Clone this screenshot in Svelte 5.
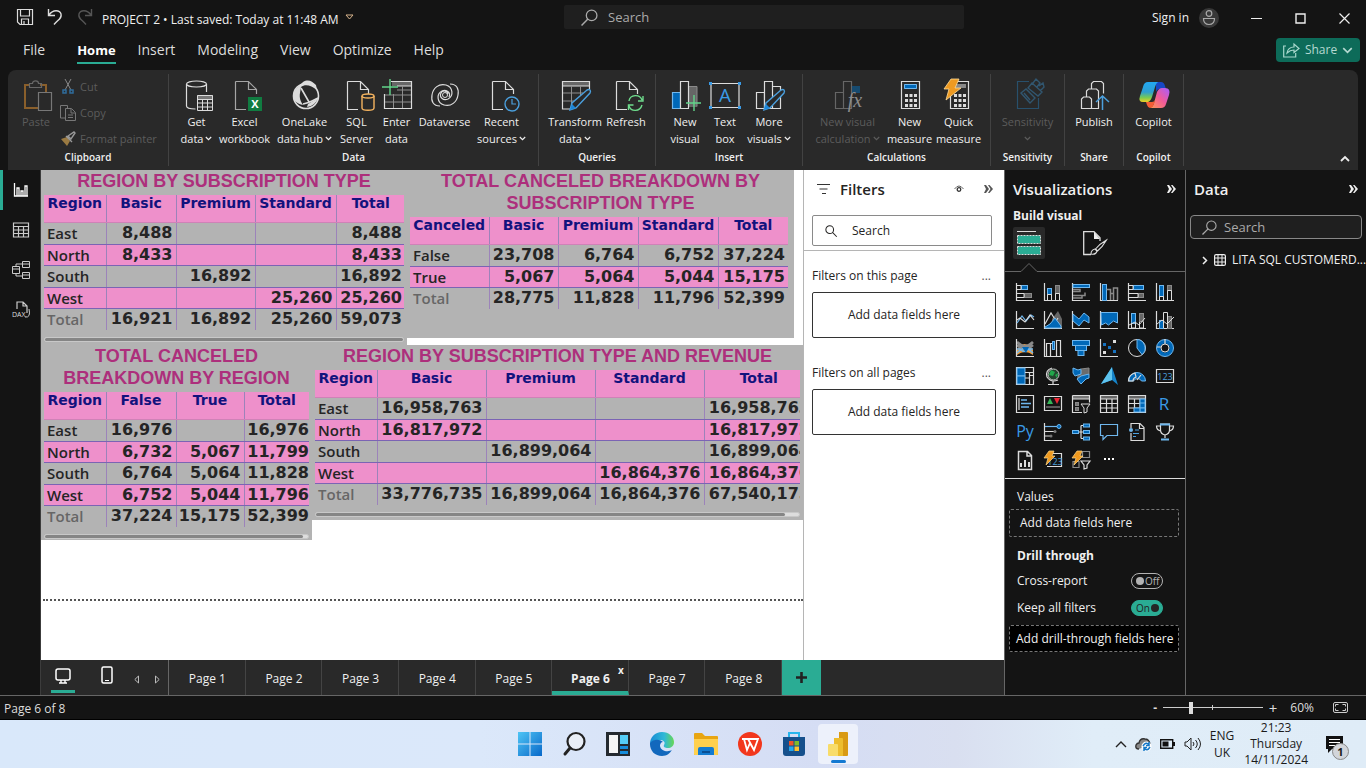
<script>
  const W = '#dcdcdc';
  const B = '#0068b8';
  const L = '#6fb7ee';
  const G = '#8a8a8a';
  const s = (d, c = W, w = 1.2, f = 'none') =>
    `<path d="${d}" fill="${f}" stroke="${c}" stroke-width="${w}"/>`;
  const f = (d, c) => `<path d="${d}" fill="${c}"/>`;
  const axes = s('M.5 0V17.5H18');
  const bolt = '<path d="M5 0h5L8 5h3L2 14l2-7H0z" fill="#f09a1f" stroke="#ffd98a" stroke-width=".7"/>';
  const page = s('M6.5 2.5H19.5L27.5 10.5V15M6.5 2.5V30.5H17M19.5 2.5V10.5H27.5');
  const calc = s('M7.5 2.5h18v27h-18z') +
    f('M11 15h3v3h-3zM15.500 15h3v3h-3zM20 15h3v3h-3zM11 20h3v3h-3zM15.500 20h3v3h-3zM20 20h3v3h-3zM11 25h3v3h-3zM15.500 25h3v3h-3zM20 25h3v3h-3z', W);
  const pencil = '<path d="M11 31l2-7L28 11q2-1 3 0t0 3L17 29z" fill="#292929" stroke="#4ba0de" stroke-width="1.400"/><path d="M11 31l2-6 4 4z" fill="#1c86d8"/>';

  const ribbonIcons = {
    paste: s('M18 29H5V6h5M20 6h6v7', '#8a5f2b', 2) + s('M9.500 8.500v-4h3c0-3.500 6-3.500 6 0h3v4z', '#686868') + s('M18.500 13.500h13v18h-13z', '#777'),
    getData: s('M5.500 5v22c0 2 4 3 9 3M25.500 5v8') + '<ellipse cx="15.500" cy="5" rx="10" ry="3" fill="none" stroke="#dcdcdc" stroke-width="1.200"/>' +
      f('M16 16h16v4H16z', '#777') + s('M16.500 16.500h15v15h-15zM16.500 20.500h15M16.500 24h15M16.500 28h15M21.500 20v12M26.500 20v12', W, 1),
    excel: s('M6.500 2.500H19.500L27.500 10.500V15M6.500 2.500V30.500H17M19.500 2.500V10.500H27.500', '#a5a5a5') + f('M19 18h14v14H19z', '#107c41') + '<text x="26" y="29" fill="#fff" font-size="11" font-weight="700" text-anchor="middle" font-family="Open Sans">X</text>',
    onelake: '<circle cx="17" cy="17" r="12.500" fill="none" stroke="#dcdcdc" stroke-width="1.600"/>' + f('M8 9L14 3c5-3 9-1 13 3l1 5C22 6 16 5 12 8l-1 6c-1 5 1 9 3 12-6-1-10-5-10-9 0-3 2-6 4-8z', W) + s('M12 9l8 14M14 25q5-1 9-3l6-3', W, 1.600) + f('M19 25l10-6c-2 5-5 8-11 9z', W),
    sql: page + '<path d="M21 17v12c0 3 12 3 12 0V17" fill="#292929" stroke="#f4b35f" stroke-width="1.400"/><ellipse cx="27" cy="17" rx="6" ry="2" fill="#292929" stroke="#f4b35f" stroke-width="1.400"/>',
    enter: f('M11 3h20v4H11z', '#666') + s('M10 2.500H30.500v27H3.500V15M16 7h15', W, 1.200) + s('M4 16h26M4 23h26M12.500 15v14M21.500 7v22M16 11h14', '#8e8e8e', 1) + s('M9 0v16M1 8h16', '#62d58a', 1.400),
    dataverse: s('M11 27C4 27 2 22 3 16 4 9 10 4 17 6c7 2 8 11 2 14-5 2-9-2-7-6 1-3 6-3 7 1') + s('M21 5c7 0 9 5 8 11-1 7-7 12-14 10-7-2-8-11-2-14 5-2 9 2 7 6') + '<circle cx="16" cy="16" r="2.500" fill="none" stroke="#dcdcdc"/>',
    recent: page + '<circle cx="26" cy="25" r="7" fill="#292929" stroke="#4ba0de" stroke-width="1.400"/>' + s('M26 20v5h4', '#4ba0de'),
    transform: f('M3 3h28v4H3z', '#666') + s('M11 30H3.500V2.500H30.500V10M3 7h27', W) + s('M4 14h20M4 22h13M12.500 7v22M21.500 7v9', '#8e8e8e', 1) + pencil,
    refresh: page + '<rect x="17" y="16" width="17" height="16" fill="#292929"/>' + s('M19 22c1-7 11-7 13-1M33 17v5h-5M32 26c-2 7-11 7-13 1M18.500 31v-5h5', '#6edb8c', 1.400),
    newVisual: f('M3 14h8v15H3z', '#0068b8') + s('M3.500 13.500h8v16h-8z', '#6fb7ee', 1.200) + f('M20 8h8v20h-8z', '#666') + s('M20 7.500h8v20', G, 1) + '<path d="M11.500 2.500h8v27h-8z" fill="#292929" stroke="#dcdcdc" stroke-width="1.200"/>' + s('M25 16v16M17 24h15', '#62d58a', 1.400),
    textBox: s('M2 4.500h28v24H2z', W, 1.200) + f('M0 3h3v3H0zM29 3h3v3h-3zM0 27h3v3H0zM29 27h3v3h-3z', '#3a9be6') + '<text x="16" y="23" fill="#3a9be6" font-size="19" text-anchor="middle" font-family="Open Sans">A</text>',
    moreVisuals: s('M3.500 13.500h8v16h-8zM19.500 7.500h8v22h-16') + '<path d="M11.500 2.500h8v27h-8z" fill="#292929" stroke="#dcdcdc" stroke-width="1.200"/>' + pencil,
    newCalc: s('M3.500 13.500h8v16h-8zM11.500 2.500h8v27h-8z', '#666') + f('M20 7h8v7h-8z', '#174b70') + '<text x="23" y="28" fill="#8b8b8b" font-size="20" font-style="italic" text-anchor="middle" font-family="Liberation Serif">fx</text>',
    measure: calc + f('M10 5h13v5H10z', '#0068b8') + s('M10.500 5.500h12v4h-12z', '#6fb7ee', 1),
    quick: calc + f('M11 5h12v4H11z', '#888') + '<path d="M8 0h8l-4 9h6L3 21l3-11H1z" fill="#ee9a21" stroke="#ffdc98" stroke-width=".8"/>',
    sensitivity: s('M17 2.500H5.500v27h21V19', '#28506c') + s('M9 14l5-4 9 9-5 5zM12 14l6 7', '#31566f', 1.400) + s('M16 9l4-5 10 9-4 4zM21 4l3-4 4 4-3 4M27 7l4-3 1 4-4 4', '#31566f', 1.400),
    publish: s('M13.500 10.500v-6l2-2h8l2 2v10M8.500 18v-6l2-2h8l2 2v17.500h-17V20l2-2h6l2 2v9.500') + s('M24.500 31V17M18 23l6.500-6 6.500 6', '#4ba0de', 1.500),
    copilot: '<defs><linearGradient id="cp1" x1="0" y1="0" x2="0" y2="1"><stop offset="0" stop-color="#22a8f2"/><stop offset=".5" stop-color="#2e9fd0"/><stop offset=".78" stop-color="#7acb50"/><stop offset="1" stop-color="#f3cf22"/></linearGradient><linearGradient id="cp2" x1="1" y1="0" x2="0" y2="1"><stop offset="0" stop-color="#a75dff"/><stop offset=".5" stop-color="#f15a98"/><stop offset="1" stop-color="#ff9952"/></linearGradient></defs>' +
      f('M18 3h5q3 0 4 4l1 3h-6q-3 0-4 3z', '#1747c4') + '<path d="M10 3h10q-2 1-3 5l-3 10q-2 6-6 5H5q-5 0-3-6L5 8q1-5 5-5z" fill="url(#cp1)"/><path d="M23 29H12q3-1 4-5l3-11q2-4 5-4h3q6 0 4 7l-3 9q-1 4-5 4z" fill="url(#cp2)"/>' + f('M8 23h6q2 0 3-2-1 7-5 8-2 0-3-3z', '#f35d36')
  };

  const groups = [
    { name: 'Data', items: [['getData', 'Get', 'data', 38, 1], ['excel', 'Excel', 'workbook', 58], ['onelake', 'OneLake', 'data hub', 62, 1], ['sql', 'SQL', 'Server', 42], ['enter', 'Enter', 'data', 38], ['dataverse', 'Dataverse', '', 58], ['recent', 'Recent', 'sources', 56, 1]] },
    { name: 'Queries', items: [['transform', 'Transform', 'data', 58, 1], ['refresh', 'Refresh', '', 44]] },
    { name: 'Insert', items: [['newVisual', 'New', 'visual', 38], ['textBox', 'Text', 'box', 42], ['moreVisuals', 'More', 'visuals', 46, 1]] },
    { name: 'Calculations', items: [['newCalc', 'New visual', 'calculation', 78, 1, 1], ['measure', 'New', 'measure', 46], ['quick', 'Quick', 'measure', 52]] },
    { name: 'Sensitivity', items: [['sensitivity', 'Sensitivity', '', 73, 1, 1]] },
    { name: 'Share', items: [['publish', 'Publish', '', 58]] },
    { name: 'Copilot', items: [['copilot', 'Copilot', '', 59]] }
  ];
  const groupWidths = [370, 117, 147, 188, 74, 59, 60];

  const t = (x, y, c, size, str) => `<text x="${x}" y="${y}" fill="${c}" font-size="${size}" text-anchor="middle" font-family="Open Sans">${str}</text>`;
  const r = (x, y, w, h, fill, stroke = 'none') => `<rect x="${x}" y="${y}" width="${w}" height="${h}" fill="${fill}" stroke="${stroke}"/>`;
  const visuals = [
    ['Stacked bar chart', axes + r(5.5, 2.5, 6, 4, B, L) + r(8.5, 10.5, 7, 4, '#666', G) + s('M1 2.500h4v4H1M1 10.500h7v4H1', W, 1)],
    ['Stacked column chart', axes + r(3.5, 5.5, 4, 6, B, L) + r(11.5, 2.5, 4, 8, '#666', G) + s('M3.500 17v-5.500h4V17M11.500 17v-6.500h4V17', W, 1)],
    ['Clustered bar chart', axes + r(1, 1.5, 16.500, 3, B, L) + s('M1 8.500h7v-2H1M1 12.500h12v-3M1 15h9v-2.500', G, 1.500)],
    ['Clustered column chart', axes + r(2.5, 1.5, 4, 16, B, L) + s('M6.500 6.500h4V17M10.500 10.500h3V17M13.500 17V5h4v12', G, 1.500)],
    ['100% stacked bar chart', axes + r(5.5, 2.5, 10, 4, B, L) + r(10.500, 10.5, 5, 4, '#666', G) + s('M1 2.500h4v4H1M1 10.500h9v4H1', W, 1)],
    ['100% stacked column chart', axes + r(3.5, 2.5, 4, 11, B, L) + r(11.500, 2.5, 4, 5, '#666', G) + s('M3.500 17v-3.500h4V17M11.500 17V7.500h4V17', W, 1)],
    ['Line chart', axes + s('M1 12l5-7 4 5 5-6 3 2', L) + s('M1 9l3-2 5 4 5-7 4 5')],
    ['Area chart', f('M8 8l6-8 4 8v9H8z', '#666') + axes + s('M1 13L7 2l5 8 2-3') + s('M1 16l5-3 5-6 6 8v2H1z', L, 1, B)],
    ['Stacked area chart', axes + s('M1 3l6 5 5-6 5 4v6l-5-3-5 6-6-5z', L, 1, B)],
    ['100% stacked area chart', axes + s('M1 1.500h16.500V12l-4-2-5 4-3-2-4 2z', L, 1, B)],
    ['Line and stacked column chart', axes + r(3.5, 2.5, 4, 10, B, L) + r(11.5, 2.5, 4, 8, '#666', G) + s('M3.500 12v5h4v-5M11.500 11v6h4v-6M1 14l6-3 4 3 6-7', W, 1)],
    ['Line and clustered column chart', axes + r(3.500, 9.500, 4, 8, B, L) + r(11.500, 5.500, 4, 12, '#666', G) + s('M7.500 17V1.500h4V17M1 13l5-4 5 4 7-7', W, 1)],
    ['Ribbon chart', f('M1 11q7-12 16 0v5q-8-6-16 0z', '#f19a37') + s('M1 3q8 8 16 0M1 6q8 7 16 0', G, 2.500) + s('M1 10h3q5 5 8 0h5M1 14q8-9 16 0', L, 1.500) + f('M6 8h7l-3 6z', B) + axes],
    ['Waterfall chart', axes + s('M2.500 17V4.500h4V17M6.500 4.500h3v5M12.500 17V1.500h4V17') + r(8.5, 2.5, 2, 8, B, L)],
    ['Funnel', r(.5, 1.500, 17, 5, B, L) + r(3.500, 6.500, 11, 5, B, L) + r(6, 11.500, 6, 5, B, L)],
    ['Scatter chart', axes + f('M3 4h3v3H3zM8 7h3v3H8zM13 11h3v3h-3z', '#1672c0') + f('M13 1h3v3h-3zM3 12h3v3H3z', W)],
    ['Pie chart', '<circle cx="9" cy="9" r="8.500" fill="none" stroke="#dcdcdc"/>' + s('M9 .5a8.500 8.500 0 0 1 5 15L9 9z', L, 1, B)],
    ['Donut chart', '<circle cx="9" cy="9" r="6.500" fill="none" stroke="#0068b8" stroke-width="4"/><circle cx="9" cy="9" r="8.500" fill="none" stroke="#6fb7ee"/><circle cx="9" cy="9" r="4" fill="#141414" stroke="#dcdcdc"/>' + s('M9 0v5M1 8h4', W)],
    ['Treemap', s('M.5.500h17v17H.5z') + r(1, 1, 8, 8, B, L) + r(1, 9, 8, 8, B, L) + s('M9 5.500h8M13.500 5v12M9 11h5M13 8.500h4')],
    ['Map', '<circle cx="9.500" cy="7.500" r="5.500" fill="#25452f" stroke="#ccc"/>' + f('M7 3l4 2-2 4-4-1zM11 8l3-2-1 5z', '#21a84b') + s('M8 1q-7 2-5 9 4 6 11 3M9 14v3M4 17.500h11')],
    ['Filled map', f('M6 3l5-1 6-1v9l-3 2-5 5-4-5z', '#6c6c6c') + s('M1 1l5 2 3-1v5l-6 2-2-3zM9 9l8-2v4l-3 1-5 5-4-5z', L, 1, B) + s('M9 2l8-1v6', G, 1)],
    ['Azure map', f('M12 0l6 18-6-5-11 4z', '#1684c9') + f('M12 0l0 13-11 4z', '#5fc4ee')],
    ['Gauge', s('M.5 14a8.500 8.500 0 0 1 17 0h-4a4.500 4.500 0 0 0-8 0z', L, 1, B) + s('M.5 14A8.500 8.500 0 0 1 7 6l1 4q-3 1-3 4zM9 13l4-5')],
    ['Card', s('M.5 2.500h17v13H.5z') + t(9, 13, '#4ba0de', 9, '123')],
    ['Multi-row card', s('M.5.500h17v17H.5zM3 3v12') + s('M5 5h6M5 8.500h10M5 12h8', L, 1.500)],
    ['KPI', s('M.5 1.500h17v14H.5z') + f('M3 9l3-6 3 6z', '#35b657') + f('M10 3h6l-3 6z', '#ed2734') + s('M2 12h14', G)],
    ['Slicer', f('M1 1h16v3H1z', '#777') + s('M.5.500h17v7M.5.500v17H10M1 4h16') + r(3.500, 7.500, 3, 3, '#777', G) + r(3.500, 12.500, 3, 3, '#777', G) + s('M9 9h9l-3 4v4l-3 1v-5z', W, 1, '#141414')],
    ['Table', f('M1 1h16v3H1z', '#666') + s('M.5.500h17v17H.5zM1 4h16M1 8.500h16M1 13h16M6.500 4v13M12 4v13')],
    ['Matrix', f('M1 1h16v3H1z', '#666') + s('M.5.500h17v17H.5zM1 4h16M1 8.500h11M1 13h11M6.500 4v13M12 4v9') + r(12, 4, 5, 9, B, L) + r(6, 13, 11, 4, B, L) + s('M12 8h5M12 13v4', L)],
    ['R script visual', t(8, 15, '#3a9be6', 17, 'R')],
    ['Python visual', t(9, 14, '#3a9be6', 16, 'Py')],
    ['Key influencers', s('M.5 0v17.500H18M1 8.500h9M1 13h5') + s('M1 3.500h12', L) + '<circle cx="15" cy="3.500" r="2" fill="#0068b8" stroke="#6fb7ee"/><circle cx="11" cy="8.500" r="1.500" fill="#777"/><circle cx="7" cy="13" r="1.500" fill="#777"/>'],
    ['Decomposition tree', s('M6 9h6M9 2.500v13M9 2.500h3M9 15.500h3') + r(.5, 7.500, 6, 3, B, L) + r(11.500, 1, 6, 3, B, L) + r(11.500, 7.500, 6, 3, B, L) + r(11.500, 14, 6, 3, B, L)],
    ['Q&amp;A', s('M.5 1.500h17v11H7l-4 4v-4H.5z', L)],
    ['Narrative', s('M3 5V.500h9l4 4v13H3V10M11.500.500v5H16') + '<circle cx="3" cy="7" r="2" fill="#6fb7ee"/>' + s('M7 7h4M5 10.500h6M5 13.500h3', '#4ba0de')],
    ['Metrics', s('M4.500 1h9v6q0 4-4.500 5-4.500-1-4.500-5zM4 3H.5q0 4 4 5M14 3h3.500q0 4-4 5M9 12v3') + s('M4 1.500h10M5 16.500h8', L, 1.800)],
    ['Paginated report', s('M2.500.500h9l4 4v14h-13zM11 1v4h4', W, 1.500) + f('M4 12h2v4H4zM8 9h2v7H8zM12 11h2v5h-2z', W)],
    ['New card', s('M8 2.500h9.500v13H3') + t(11, 14, '#4ba0de', 9, '123') + bolt],
    ['New slicer', s('M10.500.500h7v6h-7zM1 10.500h6v6H1z', G) + s('M9 10h9l-3 4v3l-3 1v-4z') + bolt],
    ['More visuals', '<path d="M4 7h2v2H4zM8 7h2v2H8zM12 7h2v2h-2z" fill="#fff"/>']
  ];

  const reports = [
    { cls: 'v1', title: 'REGION BY SUBSCRIPTION TYPE', cols: [62, 70, 79, 81, 69], thumb: 100,
      head: ['Region', 'Basic', 'Premium', 'Standard', 'Total'],
      rows: [['East', '8,488', '', '', '8,488'], ['North', '8,433', '', '', '8,433'], ['South', '', '16,892', '', '16,892'], ['West', '', '', '25,260', '25,260'], ['Total', '16,921', '16,892', '25,260', '59,073']] },
    { cls: 'v2', title: 'TOTAL CANCELED BREAKDOWN BY SUBSCRIPTION TYPE', cols: [79, 69, 80, 80, 70], thumb: 0,
      head: ['Canceled', 'Basic', 'Premium', 'Standard', 'Total'],
      rows: [['False', '23,708', '6,764', '6,752', '37,224'], ['True', '5,067', '5,064', '5,044', '15,175'], ['Total', '28,775', '11,828', '11,796', '52,399']] },
    { cls: 'v3', title: 'TOTAL CANCELED BREAKDOWN BY REGION', cols: [62, 70, 68, 65], thumb: 98,
      head: ['Region', 'False', 'True', 'Total'],
      rows: [['East', '16,976', '', '16,976'], ['North', '6,732', '5,067', '11,799'], ['South', '6,764', '5,064', '11,828'], ['West', '6,752', '5,044', '11,796'], ['Total', '37,224', '15,175', '52,399']] },
    { cls: 'v4', title: 'REGION BY SUBSCRIPTION TYPE AND REVENUE', cols: [62, 109, 109, 109, 109], thumb: 97,
      head: ['Region', 'Basic', 'Premium', 'Standard', 'Total'],
      rows: [['East', '16,958,763', '', '', '16,958,763'], ['North', '16,817,972', '', '', '16,817,972'], ['South', '', '16,899,064', '', '16,899,064'], ['West', '', '', '16,864,376', '16,864,376'], ['Total', '33,776,735', '16,899,064', '16,864,376', '67,540,175']] }
  ];
  const total = (cols) => cols.reduce((a, b) => a + b, 0);

  const pages = [1, 2, 3, 4, 5, 6, 7, 8];
  let current = $state(6);
  let menu = $state('Home');
  let crossReport = $state(false);
  let keepFilters = $state(true);
  let zoom = $state(27);
</script>

{#snippet icon(body, size = 18)}
  <svg width={size} height={size} viewBox="0 0 {size} {size}" aria-hidden="true">{@html body}</svg>
{/snippet}

{#snippet caret(size = 7, weight = 1)}
  <svg class="caret" width={size} height={size} viewBox="0 0 7 7" aria-hidden="true"><path d="M.8 2l2.700 2.700L6.200 2" fill="none" stroke="currentColor" stroke-width={weight} /></svg>
{/snippet}

{#snippet collapse()}
  <svg width="10" height="10" viewBox="0 0 10 10" aria-hidden="true"><path d="M1 1h2l3 4-3 4H1l2-4zM5 1h1.500L10 5 6.500 9H5l2.500-4z" fill="currentColor" /></svg>
{/snippet}

{#snippet lens(size = 16)}
  <svg width={size} height={size} viewBox="0 0 16 16" aria-hidden="true"><circle cx="10" cy="6" r="5" fill="none" stroke="currentColor" stroke-width="1.200" /><path d="M6.500 9.500L.5 15.500" stroke="currentColor" stroke-width="1.400" /></svg>
{/snippet}

{#snippet lensRight(size = 14)}
  <svg width={size} height={size} viewBox="0 0 14 14" aria-hidden="true"><circle cx="5.500" cy="5.500" r="4.500" fill="none" stroke="currentColor" stroke-width="1.200" /><path d="M8.700 8.700l5 5" stroke="currentColor" stroke-width="1.200" /></svg>
{/snippet}

<div class="app">
  <header class="titlebar">
    <div class="file-info">
      <button aria-label="Save">
        <svg width="16" height="16" viewBox="0 0 16 16"><path d="M.5.500h15v15H3l-2.500-2.500zM3.500 1v6h9V1M4.500 15v-5h7v5M7 12v3" fill="none" stroke="#ddd" stroke-width="1.200" /></svg>
      </button>
      <button aria-label="Undo">
        <svg width="16" height="16" viewBox="0 0 16 16"><path d="M1.500 0v6.500H8M2 6C6 0 13 1 14 5c1 4-2 5-7 10.500" fill="none" stroke="#ddd" stroke-width="1.400" /></svg>
      </button>
      <button aria-label="Redo">
        <svg width="16" height="16" viewBox="0 0 16 16"><path d="M14.500 0v6.500H8M14 6C10 0 3 1 2 5c-1 4 2 5 7 10.500" fill="none" stroke="#555" stroke-width="1.400" /></svg>
      </button>
      <span class="doc">PROJECT 2 • Last saved: Today at 11:48 AM</span>
      <svg width="9" height="6" viewBox="0 0 9 6" aria-hidden="true"><path d="M1 1h7L4.500 5z" fill="none" stroke="#d8b48c" /></svg>
    </div>
    <label class="top-search">{@render lens(17)}<input aria-label="Search" placeholder="Search" /></label>
    <div class="window">
      <span>Sign in</span>
      <svg class="avatar" width="20" height="20" viewBox="0 0 20 20" aria-hidden="true"><circle cx="10" cy="10" r="10" fill="#383838" /><circle cx="10" cy="5.500" r="2.800" fill="none" stroke="#aaa" stroke-width="1.200" /><path d="M4.500 10.500h11q0 6-5.500 6t-5.500-6z" fill="none" stroke="#aaa" stroke-width="1.200" /></svg>
      <button aria-label="Minimize"><svg width="11" height="11" viewBox="0 0 11 11"><path d="M0 5.500h11" stroke="#eee" /></svg></button>
      <button aria-label="Maximize"><svg width="11" height="11" viewBox="0 0 11 11"><path d="M1 1h9v9H1z" fill="none" stroke="#eee" stroke-width="1.400" /></svg></button>
      <button aria-label="Close"><svg width="11" height="11" viewBox="0 0 11 11"><path d="M.5.500l10 10M10.500.500l-10 10" stroke="#eee" stroke-width="1.200" /></svg></button>
    </div>
  </header>

  <nav class="menubar" aria-label="Ribbon tabs">
    {#each ['File', 'Home', 'Insert', 'Modeling', 'View', 'Optimize', 'Help'] as item}
      <button class:active={menu === item} onclick={() => (menu = item)}>{item}</button>
    {/each}
    <button class="share">
      <svg width="17" height="15" viewBox="0 0 17 15" aria-hidden="true"><path d="M3 3H.7v11h12v-4M4 10q1-6 7-6V1l5 4.500-5 4V7Q7 7 4 10z" fill="none" stroke="#a9d8cd" stroke-width="1.200" /></svg>
      Share {@render caret(11)}
    </button>
  </nav>

  <section class="ribbon" aria-label="Home ribbon">
    <div class="group clipboard">
      <div class="items">
        <button class="tool off">{@render icon(ribbonIcons.paste, 32)}<span>Paste</span></button>
        <div class="small-tools">
          <button><svg width="16" height="16" viewBox="0 0 16 16"><path d="M5 0l6 11M11 0L5 11" stroke="#888" fill="none" /><path d="M3 11h3v3H3zM10 11h3v3h-3z" fill="none" stroke="#2f6c9c" stroke-width="1.500" /></svg>Cut</button>
          <button><svg width="16" height="16" viewBox="0 0 16 16"><path d="M5 13H.5V.500h7V3M5.500 3.500h6l4 4v8h-10zM11 4v4h4M8 10h5M8 12.500h5" stroke="#777" fill="none" /></svg>Copy</button>
          <button><svg width="16" height="16" viewBox="0 0 16 16"><path d="M1 8l6 7 3-5-3-4z" fill="#9a7a42" /><path d="M6 5l6 6M8 5l6-4 1 1-4 6z" stroke="#999" fill="none" stroke-width="1.400" /></svg>Format painter</button>
        </div>
      </div>
      <h2>Clipboard</h2>
    </div>
    {#each groups as g, i}
      <div class="group" style="width: {groupWidths[i]}px">
        <div class="items">
          {#each g.items as [name, a, b, width, drop, off]}
            <button class="tool" class:off style="width: {width}px">
              {@render icon(ribbonIcons[name], 32)}
              <span>{a}</span>
              <span>{b}{#if drop}{@render caret(7, 1.2)}{/if}</span>
            </button>
          {/each}
        </div>
        <h2>{g.name}</h2>
      </div>
    {/each}
    <button class="fold" aria-label="Collapse ribbon"><svg width="10" height="7" viewBox="0 0 10 7"><path d="M1 6l4-4 4 4" fill="none" stroke="#eee" stroke-width="1.800" /></svg></button>
  </section>

  <main>
    <nav class="views" aria-label="Views">
      <button class="active" aria-label="Report view"><svg width="16" height="16" viewBox="0 0 16 16"><path d="M1.500 1v13H15M4 14V6h2v8M8 14V9h2v5M12 14V4h2v10" fill="none" stroke="#fff" stroke-width="1.300" /></svg></button>
      <button aria-label="Table view"><svg width="16" height="16" viewBox="0 0 16 16"><path d="M.5 1h15v14H.5zM1 4.500h14M1 8h14M1 11.500h14M5.500 4v11M10.500 4v11" fill="none" stroke="#ccc" stroke-width="1.200" /></svg></button>
      <button aria-label="Model view"><svg width="18" height="18" viewBox="0 0 18 18"><path d="M.5 5.500h7v7h-7zM1 8h6M10.500.500h7v6h-7zM11 3h6M10.500 11.500h7v6h-7zM11 14h6M4 5V3h6M4 13v2h6" fill="none" stroke="#ccc" /></svg></button>
      <button aria-label="DAX query view"><svg width="18" height="18" viewBox="0 0 18 18"><path d="M5 8V1h6l4 4v7M11 1v4h4" fill="none" stroke="#ccc" stroke-width="1.200" /><text x="0" y="16" fill="#ddd" font-size="7" font-family="Open Sans">DAX</text><path d="M13 16q6 1 4-8" stroke="#ccc" fill="none" /></svg></button>
    </nav>

    <div class="center">
      <div class="work">
        <div class="canvas">
          {#each reports as rep}
            <section class="visual {rep.cls}">
              <h3>{rep.title}</h3>
              <div class="clip">
                <table style="width: {total(rep.cols)}px">
                  <colgroup>{#each rep.cols as w}<col style="width: {w}px" />{/each}</colgroup>
                  <thead><tr>{#each rep.head as h}<th scope="col">{h}</th>{/each}</tr></thead>
                  <tbody>
                    {#each rep.rows as row}
                      <tr class:sum={row[0] === 'Total'}>
                        <th scope="row">{row[0]}</th>
                        {#each row.slice(1) as v}<td>{v}</td>{/each}
                      </tr>
                    {/each}
                  </tbody>
                </table>
              </div>
              {#if rep.thumb}<div class="scroll"><div style="width: {rep.thumb}%"></div></div>{/if}
            </section>
          {/each}
          <div class="page-end"></div>
        </div>

        <aside class="filters">
          <div class="filter-head">
            <div class="heading">
              <svg width="14" height="12" viewBox="0 0 14 12" aria-hidden="true"><path d="M0 1.500h13M2.500 6h8M5 10.500h4" stroke="#333" stroke-width="1.200" /></svg>
              <h2>Filters</h2>
              <svg class="eye" width="10" height="8" viewBox="0 0 10 8" aria-hidden="true"><path d="M.5 4Q5-2 9.500 4" fill="none" stroke="#666" /><circle cx="5" cy="4.500" r="1.800" fill="none" stroke="#333" stroke-width="1.300" /></svg>
              <button aria-label="Collapse filters">{@render collapse()}</button>
            </div>
            <label class="filter-search">{@render lensRight(12)}<input aria-label="Search filters" placeholder="Search" /></label>
          </div>
          <div class="filter-block">
            <div class="row"><span>Filters on this page</span><button aria-label="More options for this page">...</button></div>
            <div class="drop">Add data fields here</div>
          </div>
          <div class="filter-block">
            <div class="row"><span>Filters on all pages</span><button aria-label="More options for all pages">...</button></div>
            <div class="drop">Add data fields here</div>
          </div>
        </aside>
      </div>

      <div class="pagebar">
        <div class="layouts">
          <button class="active" aria-label="Desktop layout"><svg width="16" height="17" viewBox="0 0 16 17"><rect x="1" y="1" width="14" height="11" rx="2" fill="none" stroke="#fff" stroke-width="1.500" /><path d="M4 15h8M6 12v3M10 12v3" stroke="#fff" stroke-width="1.400" /></svg></button>
          <button aria-label="Mobile layout"><svg width="12" height="18" viewBox="0 0 12 18"><rect x="1" y="1" width="10" height="16" rx="1.500" fill="none" stroke="#fff" stroke-width="1.500" /><path d="M4 14.500h4" stroke="#fff" /></svg></button>
          <button class="step" aria-label="Previous page"><svg width="5" height="9" viewBox="0 0 5 9"><path d="M4.500 1v7L.8 4.500z" fill="none" stroke="#bbb" /></svg></button>
          <button class="step" aria-label="Next page"><svg width="5" height="9" viewBox="0 0 5 9"><path d="M.5 1v7l3.700-3.500z" fill="none" stroke="#bbb" /></svg></button>
        </div>
        <div class="tabs">
          {#each pages as p}
            <div class="tab" class:active={current === p}>
              <button onclick={() => (current = p)}>Page {p}</button>
              {#if current === p}<button class="close" aria-label="Delete page">x</button>{/if}
            </div>
          {/each}
        </div>
        <button class="add" aria-label="New page"><svg width="11" height="11" viewBox="0 0 11 11"><path d="M5.500 0v11M0 5.500h11" stroke="#222" stroke-width="2.600" /></svg></button>
      </div>
    </div>

    <aside class="viz">
      <div class="heading"><h2>Visualizations</h2><button aria-label="Collapse visualizations">{@render collapse()}</button></div>
      <h3>Build visual</h3>
      <div class="modes">
        <button class="active" aria-label="Build visual"><svg width="24" height="24" viewBox="0 0 24 24"><path d="M0 .5h19" stroke="#ddd" /><rect x=".5" y="4.500" width="23" height="8" fill="#2aac94" stroke="#ddd" stroke-dasharray="2 1" /><rect x=".5" y="15.500" width="23" height="8" fill="#2aac94" stroke="#ddd" stroke-dasharray="2 1" /></svg></button>
        <button aria-label="Format visual"><svg width="24" height="25" viewBox="0 0 24 25"><path d="M8 23.500H.7V.700H11l6 6V10" fill="none" stroke="#ddd" stroke-width="1.300" /><path d="M11 1v7h6z" fill="#eee" /><path d="M23.500 9q-7 4-11 9l2 2q5-4 9-11zM12 18q-4 1-4 5 5 1 6-3z" fill="#141414" stroke="#ddd" stroke-width="1.100" /></svg></button>
      </div>
      <svg class="notch" width="180" height="10" viewBox="0 0 180 10" aria-hidden="true"><path d="M0 9.500h16l8-8 8 8h148" fill="none" stroke="#666" /></svg>
      <div class="gallery">
        {#each visuals as [name, body]}<button aria-label={name}>{@render icon(body)}</button>{/each}
      </div>
      <div class="wells">
        <p>Values</p>
        <div class="well">Add data fields here</div>
        <h3>Drill through</h3>
        <label class="switch"><span>Cross-report</span><input type="checkbox" role="switch" bind:checked={crossReport} /><span class="track" class:on={crossReport}>{crossReport ? 'On' : 'Off'}</span></label>
        <label class="switch"><span>Keep all filters</span><input type="checkbox" role="switch" bind:checked={keepFilters} /><span class="track" class:on={keepFilters}>{keepFilters ? 'On' : 'Off'}</span></label>
        <div class="well dark">Add drill-through fields here</div>
      </div>
    </aside>

    <aside class="data">
      <div class="heading"><h2>Data</h2><button aria-label="Collapse data">{@render collapse()}</button></div>
      <label class="data-search">{@render lens(15)}<input aria-label="Search data" placeholder="Search" /></label>
      <button class="dataset">
        <svg width="6" height="9" viewBox="0 0 6 9" aria-hidden="true"><path d="M1 1l3.500 3.500L1 8" fill="none" stroke="#eee" stroke-width="1.500" /></svg>
        <svg width="12" height="12" viewBox="0 0 12 12" aria-hidden="true"><rect x=".6" y=".6" width="10.800" height="10.800" rx="1.500" fill="none" stroke="#eee" stroke-width="1.200" /><path d="M1 4h10M1 8h10M4 1v10M8 1v10" stroke="#eee" /></svg>
        <span>LITA SQL CUSTOMERD...</span>
      </button>
    </aside>
  </main>

  <footer class="status">
    <span>Page 6 of 8</span>
    <div class="zoom">
      <button aria-label="Zoom out">-</button>
      <input type="range" aria-label="Zoom" min="0" max="100" bind:value={zoom} />
      <button aria-label="Zoom in">+</button>
      <span>60%</span>
      <button class="fit" aria-label="Fit to page"><svg width="15" height="11" viewBox="0 0 15 11"><rect x=".5" y=".5" width="14" height="10" rx="1.500" fill="none" stroke="#ccc" /><path d="M5.500 2.500h-3v2M2.500 6.500v2h3M9.500 2.500h3v2M12.500 6.500v2h-3" fill="none" stroke="#ccc" /></svg></button>
    </div>
  </footer>

  <div class="taskbar">
    <div class="apps">
      <button aria-label="Start"><svg width="26" height="26" viewBox="0 0 26 26"><defs><linearGradient id="win" x1="0" y1="0" x2="1" y2="1"><stop offset="0" stop-color="#4fc5f5" /><stop offset="1" stop-color="#0868c9" /></linearGradient></defs><path d="M1 1h11.500v11.500H1zM13.500 1H25v11.500H13.500zM1 13.500h11.500V25H1zM13.500 13.500H25V25H13.500z" fill="url(#win)" /></svg></button>
      <button aria-label="Search"><svg width="26" height="26" viewBox="0 0 26 26"><circle cx="15" cy="10.500" r="8.500" fill="#e9eef7" stroke="#222" stroke-width="2.200" /><path d="M9 17l-5 6" stroke="#222" stroke-width="3" stroke-linecap="round" /></svg></button>
      <button aria-label="Widgets"><svg width="26" height="26" viewBox="0 0 26 26"><path d="M1 1h24v24H1z" fill="#242a30" /><path d="M4 4h9v18H4z" fill="#f5f5f5" /><path d="M15 4h8v9h-8z" fill="#54cdf7" /><path d="M15 15h8v3h-8zM15 20h8v3h-8z" fill="#168ddb" /></svg></button>
      <button aria-label="Edge"><svg width="26" height="26" viewBox="0 0 26 26"><defs><linearGradient id="eg" x1="0" y1="0" x2="1" y2="0"><stop offset="0" stop-color="#188bd5" /><stop offset=".6" stop-color="#2fb9d6" /><stop offset="1" stop-color="#68d754" /></linearGradient></defs><path d="M1 13C1 6 6 1 13 1s12 5 12 10c0 4-3 6-6 6-3 0-5-1-4-3 2-3-1-5-4-5C6 9 1 12 1 16z" fill="url(#eg)" /><path d="M1 13c0 7 5 12 12 12 5 0 8-3 10-6-3 2-11 2-12-4 0-2 1-4 3-4-5-5-13-1-13 2z" fill="#1268bd" /></svg></button>
      <button aria-label="File Explorer"><svg width="26" height="26" viewBox="0 0 26 26"><path d="M1 3q0-1 1-1h7l3 3h12q1 0 1 1v17q0 1-1 1H2q-1 0-1-1z" fill="#e8a512" /><path d="M1 8h24v15q0 1-1 1H2q-1 0-1-1z" fill="#ffd04e" /><path d="M5 24v-6q0-2 2-2h12q2 0 2 2v6z" fill="#137bd0" /><path d="M9 20h8v2H9z" fill="#0a4f93" /></svg></button>
      <button aria-label="WPS Office"><svg width="26" height="26" viewBox="0 0 26 26"><circle cx="13" cy="13" r="12" fill="#f2371d" /><path d="M5 8h16l-4 11-4-7-3 7L7 8M11 8l6 11" fill="none" stroke="#fff" stroke-width="1.800" /></svg></button>
      <button aria-label="Microsoft Store"><svg width="26" height="26" viewBox="0 0 26 26"><path d="M8 7V2h10v5" fill="none" stroke="#27b5ed" stroke-width="2" /><path d="M2 6h22v16q0 3-3 3H5q-3 0-3-3z" fill="#16508c" /><path d="M8 10h4.500v4.500H8z" fill="#f05325" /><path d="M13.500 10H18v4.500h-4.500z" fill="#80bb27" /><path d="M8 15.500h4.500V20H8z" fill="#24a8ec" /><path d="M13.500 15.500H18V20h-4.500z" fill="#ffc22d" /></svg></button>
      <button class="running" aria-label="Power BI"><svg width="26" height="26" viewBox="0 0 26 26"><path d="M14 1h8q1 0 1 1v22q0 1-1 1h-8z" fill="#d99a13" /><path d="M9 7h8q1 0 1 1v17H9z" fill="#edbd2d" /><path d="M4 13h8q1 0 1 1v11H4q-1 0-1-1V14q0-1 1-1z" fill="#f8dc6a" /></svg></button>
    </div>
    <div class="tray">
      <svg width="12" height="8" viewBox="0 0 12 8" aria-hidden="true"><path d="M1 7l5-5 5 5" fill="none" stroke="#222" stroke-width="1.400" /></svg>
      <svg width="17" height="15" viewBox="0 0 17 15" aria-hidden="true"><path d="M4 12Q0 12 1 8q1-2 3-2 1-5 6-4 4 0 5 5" fill="#888" stroke="#333" stroke-width="1.400" /><circle cx="11.500" cy="9.500" r="5" fill="#fff" /><path d="M8 9q3-5 6-1M15 10q-3 5-6 1M14 5v3.500h-3M9 14v-3.500h3" fill="none" stroke="#1478c8" stroke-width="1.500" /></svg>
      <svg width="16" height="10" viewBox="0 0 16 10" aria-hidden="true"><path d="M.7.700h12v8.600H.7z" fill="none" stroke="#111" stroke-width="1.400" /><path d="M2.500 2.500h6v5h-6zM13 3h2v4h-2z" fill="#111" /></svg>
      <svg width="18" height="14" viewBox="0 0 18 14" aria-hidden="true"><path d="M1 5h2l4-4v12L3 9H1zM9 5q2 2 0 4M11.500 3q3.500 4 0 8M14 1q5 6 0 12" fill="none" stroke="#222" /></svg>
      <span class="lang">ENG<br />UK</span>
      <time>21:23<br />Thursday<br />14/11/2024</time>
      <div class="notice">
        <svg width="20" height="19" viewBox="0 0 20 19" aria-hidden="true"><path d="M1 1h17v13H7l-4 4v-4H1z" fill="#111" /><path d="M4 4.500h11M4 7.500h11M4 10.500h8" stroke="#fff" /></svg>
        <b>1</b>
      </div>
    </div>
  </div>
</div>

<style>
  :global(body) { margin: 0; background: #141414; }
  .app, .app :global(*) { box-sizing: border-box; }
  .app { height: 100vh; min-height: 720px; display: flex; flex-direction: column; overflow: hidden; background: #141414; color: #f0f0f0; font: 12px/16px "Open Sans", sans-serif; }
  button, input { font: inherit; color: inherit; background: none; border: 0; padding: 0; margin: 0; outline: 0; }
  h2, h3, p { margin: 0; }
  svg { display: block; flex: none; overflow: visible; }
  input::placeholder { color: inherit; opacity: 1; }

  .titlebar { flex: none; height: 34px; display: flex; }
  .file-info { flex: 1; display: flex; align-items: center; gap: 14px; padding-left: 17px; white-space: nowrap; }
  .file-info .doc { margin: 6px -8px 0 -5px; }
  .top-search { width: 400px; height: 24px; margin-top: 5px; padding-left: 17px; display: flex; align-items: center; gap: 10px; background: #1f1f1f; border-radius: 2px; color: #aaa; font-size: 13px; }
  .top-search input { flex: 1; min-width: 0; }
  .window { width: 402px; display: flex; align-items: center; justify-content: flex-end; padding: 2px 16px 0 0; gap: 33px; }
  .window .avatar { margin: 0 -1px 0 -23px; }

  .menubar { flex: none; height: 36px; display: flex; align-items: center; padding: 0 6px 4px 23px; font-size: 14px; gap: 22px; color: #ddd; }
  .menubar button { height: 28px; padding: 0; }
  .menubar button:first-child { margin-right: 10px; }
  .menubar .active { font-weight: 700; color: #fff; font-size: 13px; border-bottom: 2px solid #2aac94; padding-top: 2px; }
  .menubar .share { margin-left: auto; width: 84px; height: 24px; display: flex; align-items: center; justify-content: center; gap: 5px; background: #0d6b59; border-radius: 4px; color: #b5d9d1; font-size: 12px; }

  .ribbon { flex: none; height: 100px; margin: 0 8px; display: flex; background: #292929; border-radius: 8px 8px 0 0; position: relative; }
  .group { height: 92px; margin-top: 4px; padding-top: 5px; border-right: 1px solid #424242; display: flex; flex-direction: column; }
  .items { flex: 1; display: flex; justify-content: center; }
  .clipboard { width: 161px; }
  .clipboard .items { justify-content: flex-start; padding-left: 8px; }
  .group h2 { font-size: 10px; line-height: 14px; font-weight: 600; text-align: center; padding-bottom: 2px; }
  .tool { display: flex; flex-direction: column; align-items: center; font-size: 11px; line-height: 17px; white-space: nowrap; }
  .tool span { display: flex; align-items: center; gap: 2px; min-height: 17px; }
  .tool :global(svg + span) { margin-top: 2px; }
  .clipboard .tool { width: 40px; }
  .group .off { color: #5c5c5c; }
  .small-tools { display: flex; flex-direction: column; gap: 10px; padding-left: 4px; color: #5c5c5c; font-size: 11px; }
  .small-tools button { display: flex; align-items: center; gap: 4px; white-space: nowrap; }
  .fold { position: absolute; right: 8px; bottom: 8px; }

  main { flex: 1; min-height: 0; display: flex; }
  .views { width: 41px; flex: none; border-right: 1px solid #3c3c3c; }
  .views button { width: 40px; height: 40px; padding-left: 2px; display: flex; align-items: center; justify-content: center; }
  .views .active { border-left: 3px solid #2aac94; padding: 0 2px 0 0; }
  .center { flex: 1; min-width: 0; display: flex; flex-direction: column; }
  .work { flex: 1; min-height: 0; display: flex; background: #fff; }
  .canvas { flex: 1; min-width: 0; position: relative; overflow: hidden; }

  .visual { position: absolute; background: #b3b3b3; padding: 0 3px; }
  .v1 { left: 0; top: 0; width: 366px; height: 175px; }
  .v2 { left: 366px; top: 0; width: 387px; height: 168px; }
  .v3 { left: 0; top: 175px; width: 271px; height: 195px; }
  .v4 { left: 271px; top: 175px; width: 491px; height: 175px; }
  .visual h3 { font: 700 18px/22px "Liberation Sans", sans-serif; color: #ad2f7c; text-align: center; padding-bottom: 3px; }
  .clip { overflow: hidden; }
  table { table-layout: fixed; border-collapse: collapse; font-family: "DejaVu Sans", Verdana, sans-serif; }
  th, td { padding: 0; white-space: nowrap; border-right: 1px solid #9c83ba; }
  th:last-child, td:last-child { border-right: 0; }
  thead th { height: 27px; padding-bottom: 9px; font-size: 14px; line-height: 17px; font-weight: 700; color: #12127d; background: #ee90cb; border-bottom: 1px solid #cf82b7; }
  tbody tr { height: 21px; }
  tbody tr:nth-child(odd) { height: 22px; }
  tbody tr:nth-child(even):not(.sum) { background: #ee90cb; }
  tbody tr:not(.sum) > * { border-bottom: 1px solid #7b64b4; }
  tbody th { padding-left: 3px; text-align: left; font: 600 15px/18px "Comic Sans MS", "Open Sans", sans-serif; color: #252525; }
  tbody td { padding-right: 3px; text-align: right; font-size: 16px; line-height: 18px; font-weight: 700; color: #252525; }
  .v3 td:last-child { padding-right: 0; }
  .sum th { color: #666; }
  .scroll { height: 5px; margin-top: 7px; background: #ddd; border-radius: 3px; border: 1px solid #c8c8c8; }
  .scroll div { height: 3px; background: #858585; border-radius: 2px; }
  .page-end { position: absolute; left: 2px; right: 0; top: 429px; border-top: 2px dotted #555; }

  .filters { width: 201px; flex: none; color: #252423; background: #fff; border-left: 1px solid #b5b5b5; }
  .filter-head { padding: 8px 12px 4px 8px; border-bottom: 1px solid #b5b5b5; }
  .heading { display: flex; align-items: center; height: 22px; }
  .heading h2 { font-size: 15px; font-weight: 600; line-height: 22px; flex: 1; }
  .filters .heading { padding-left: 5px; gap: 9px; }
  .filters .heading button { margin-left: 10px; }
  .filters .heading button, .filters .row button { color: #555; }
  .filters .heading { margin-right: -1px; }
  .filter-search { margin-top: 15px; height: 31px; border: 1px solid #8a8a8a; border-radius: 2px; padding-left: 12px; display: flex; align-items: center; gap: 15px; }
  input { min-width: 0; width: 100%; }
  .filter-block { padding: 17px 8px 0; }
  .filter-block + .filter-block { padding-top: 27px; }
  .row { display: flex; justify-content: space-between; padding-right: 5px; }
  .drop { margin-top: 8px; height: 46px; border: 1px solid #333; border-radius: 2px; display: flex; align-items: center; justify-content: center; }

  .pagebar { height: 35px; flex: none; display: flex; background: #292929; }
  .layouts { width: 128px; flex: none; display: flex; align-items: center; padding: 0 0 0 10px; border-right: 1px solid #666; }
  .layouts button { width: 24px; height: 31px; display: flex; align-items: center; justify-content: center; border-bottom: 3px solid transparent; }
  .layouts button:nth-child(2) { margin: 0 8px 2px 20px; }
  .layouts .active { border-color: #2aac94; }
  .layouts .step { width: 21px; padding-top: 6px; }
  .tabs { width: 613px; flex: none; display: flex; }
  .tab { flex: 1; display: flex; position: relative; border-right: 1px solid #444; }
  .tab button:first-child { flex: 1; padding: 3px 0 0 1px; }
  .tab.active { font-weight: 700; border-bottom: 4px solid #2aac94; }
  .tab.active button:first-child { padding-top: 6px; }
  .tab .close { position: absolute; right: 4px; top: 2px; font-size: 10px; }
  .add { width: 39px; background: #2aac94; display: flex; align-items: center; justify-content: center; }

  .viz { width: 181px; flex: none; border-left: 1px solid #666; }
  .viz .heading { margin: 8px 9px 8px 8px; }
  .viz h3 { font-size: 12px; line-height: 16px; padding-left: 8px; }
  .modes { display: flex; gap: 34px; padding: 3px 8px 0; }
  .modes button { width: 32px; height: 32px; display: flex; align-items: center; justify-content: center; }
  .modes .active { background: #292929; border-radius: 2px; }
  .notch { margin-top: 3px; }
  .gallery { display: grid; grid-template-columns: repeat(6, 18px); grid-auto-rows: 18px; gap: 10px; padding: 11px 11px 9px; border-bottom: 1px solid #ddd; }
  .wells { padding: 10px 6px 0 4px; }
  .wells p { padding-left: 8px; }
  .well { margin-top: 4px; height: 28px; border: 1px dashed #777; border-radius: 2px; padding: 0 10px; display: flex; align-items: center; white-space: nowrap; }
  .well + h3 { margin-top: 11px; }
  .well.dark { background: #000; padding: 0 6px; margin-top: 9px; height: 27px; }
  .switch { display: flex; align-items: center; justify-content: space-between; padding: 0 16px 0 8px; height: 17px; margin-top: 8px; position: relative; }
  .switch input { position: absolute; opacity: 0; width: 32px; right: 16px; }
  .switch + .switch { margin-top: 10px; }
  .track { width: 32px; height: 16px; border: 1px solid #b3b3b3; border-radius: 8px; color: #b3b3b3; font-size: 10px; line-height: 14px; display: flex; align-items: center; gap: 1px; padding-left: 4px; }
  .track::before { content: ""; width: 8px; height: 8px; border-radius: 50%; background: #b3b3b3; }
  .track.on { background: #2aac94; border-color: #2aac94; color: #222; }
  .track.on::before { order: 2; background: #252525; }

  .data { width: 181px; flex: none; border-left: 1px solid #666; }
  .data .heading { margin: 8px 8px 15px; }
  .data-search { height: 24px; margin: 0 4px; border: 1px solid #888; border-radius: 4px; background: #1f1f1f; padding-left: 11px; display: flex; align-items: center; gap: 7px; color: #aaa; font-size: 13px; }
  .dataset { margin: 13px 0 0 16px; display: flex; align-items: center; gap: 6px; white-space: nowrap; }

  .status { height: 25px; flex: none; display: flex; justify-content: space-between; align-items: center; padding: 2px 18px 0 4px; border-top: 1px solid #666; border-bottom: 1px solid #000; color: #ddd; }
  .zoom { display: flex; align-items: center; margin-top: -2px; }
  .zoom > button:first-child { font-weight: 700; width: 7px; margin-right: 4px; }
  .zoom input { appearance: none; width: 100px; height: 12px; background: linear-gradient(#ccc, #ccc) center / 100% 1px no-repeat, linear-gradient(#ccc, #ccc) center / 1px 5px no-repeat; }
  .zoom input::-webkit-slider-thumb { appearance: none; width: 4px; height: 12px; background: #ddd; }
  .zoom input + button { margin: 0 13px 0 6px; font-size: 15px; }
  .fit { margin-left: 19px; }

  .taskbar { height: 48px; flex: none; display: flex; color: #1a1a1a; background: linear-gradient(90deg, #d9e8fa, #dbe8fa 35%, #d5ddf4 60%, #d9dff0 70%, #e0edf8 80%, #dfecf7); }
  .apps { flex: 1; display: flex; justify-content: flex-end; gap: 4px; padding: 4px 0; }
  .apps button { width: 40px; height: 40px; display: flex; align-items: center; justify-content: center; position: relative; }
  .apps .running { background: #edf1fb; border-radius: 4px; }
  .running::after { content: ""; position: absolute; bottom: 1px; width: 15px; height: 3px; border-radius: 2px; background: #1479d2; }
  .tray { width: 508px; display: flex; align-items: center; justify-content: flex-end; gap: 8px; padding-right: 15px; white-space: nowrap; }
  .tray .lang { text-align: center; line-height: 17px; }
  time { text-align: center; margin: 0 9px 0 2px; }
  .notice { position: relative; width: 26px; height: 19px; }
  .notice b { position: absolute; left: 7px; top: 8px; width: 17px; height: 17px; border-radius: 50%; background: #d2d5da; border: 1px solid #888; font-size: 11px; line-height: 15px; text-align: center; }
</style>
